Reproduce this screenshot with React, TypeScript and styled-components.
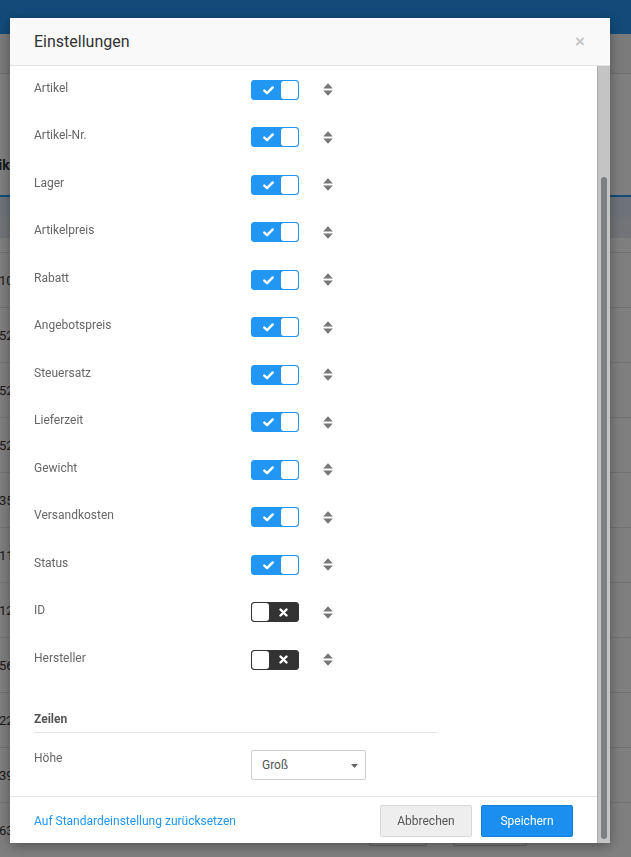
import React, { useLayoutEffect, useRef } from 'react';
import styled, { createGlobalStyle } from 'styled-components';

const GlobalStyle = createGlobalStyle`
  html, body { margin: 0; padding: 0; overflow: hidden; }
  body { font-family: Roboto, "Noto Sans", "Liberation Sans", sans-serif; background: #fff; }
  * { box-sizing: border-box; }
`;

/* ---------- page behind the dialog ---------- */
const Page = styled.div`
  width: 631px;
  height: 857px;
  overflow: hidden;
  background: #fff;
`;
const TopBar = styled.div`
  height: 34px;
  background: #2496f4;
`;
const SubBar = styled.div`
  height: 40px;
  background: #f6f6f6;
  border-bottom: 1px solid #dcdcdc;
`;
const PageHeading = styled.h1`
  margin: 0 0 0 -21px;
  height: 121px;
  padding-top: 81px;
  font: 700 14px/20px Roboto, sans-serif;
  color: #333;
`;
const TableHead = styled.div`
  height: 43px;
  border-top: 2px solid #2496f4;
  background: linear-gradient(#dbe7f2 0, #dbe7f2 50%, #e4e9ee 50%);
`;
const FilterGap = styled.div`
  height: 15px;
  border-bottom: 1px solid #e6e6e6;
`;
const TRow = styled.div`
  height: 55px;
  border-bottom: 1px solid #e6e6e6;
  display: flex;
  align-items: center;
  margin-left: -1px;
  font: 13px Roboto, sans-serif;
  color: #333;
`;
const RowActions = styled.div`
  margin-left: auto;
  margin-right: 104px;
  display: flex;
  gap: 26px;
`;
const GhostBtn = styled.span<{ $w: number }>`
  display: block;
  width: ${(p) => p.$w}px;
  height: 32px;
  border: 1px solid #c8c8c8;
  border-radius: 2px;
  background: #fafafa;
`;

/* ---------- dialog ---------- */
const Backdrop = styled.div`
  position: fixed;
  inset: 0;
  background: rgba(0, 0, 0, 0.5);
  padding: 18px 0 0 10px;
`;
const Modal = styled.div`
  width: 600px;
  height: 825px;
  background: #fff;
  display: flex;
  flex-direction: column;
  box-shadow: 0 3px 12px rgba(0, 0, 0, 0.35);
`;
const ModalHeader = styled.div`
  flex: none;
  height: 48px;
  background: #f9f9f9;
  border-bottom: 1px solid #e5e5e5;
  display: flex;
  align-items: center;
  justify-content: space-between;
  padding: 0 25px 0 24px;
`;
const Title = styled.h4`
  margin: 0;
  font: 400 16px/20px Roboto, sans-serif;
  color: #333;
`;
const Close = styled.button`
  border: 0;
  background: none;
  padding: 0;
  font: 700 17px/1 "Liberation Sans", Arial, sans-serif;
  color: #c6c6c6;
  cursor: pointer;
`;
const ScrollArea = styled.div`
  flex: 1;
  min-height: 0;
  display: flex;
`;
const ScrollContent = styled.div`
  flex: 1;
  min-width: 0;
  overflow: hidden;
`;
const ScrollTrack = styled.div`
  flex: none;
  width: 13px;
  background: #c4c4c4;
  border-left: 1px solid #a9a9a9;
  padding: 111px 3px 4px 3px;
`;
const ScrollThumb = styled.div`
  width: 6px;
  height: 662px;
  border-radius: 3px;
  background: #7d7f81;
`;
const Body = styled.div`
  padding: 12px 24px 16px;
`;
const SectionTitle = styled.div<{ $top: number }>`
  width: 403px;
  padding-top: ${(p) => p.$top}px;
  padding-bottom: 4px;
  border-bottom: 1px solid #e5e5e5;
  font: 700 12px/18px Roboto, sans-serif;
  color: #555;
`;
const Row = styled.div`
  display: grid;
  grid-template-columns: 217px 48px auto;
  align-items: center;
  height: 47.5px;
`;
const Label = styled.span`
  font: 400 12px/16px Roboto, sans-serif;
  color: #666;
  margin-bottom: 4px;
`;
const Toggle = styled.span<{ $on: boolean }>`
  position: relative;
  display: block;
  width: 48px;
  height: 20px;
  border-radius: 3px;
  border: 1px solid ${(p) => (p.$on ? '#2196f3' : '#333')};
  background: ${(p) => (p.$on ? '#2196f3' : '#333')};
`;
const Knob = styled.span<{ $on: boolean }>`
  position: absolute;
  top: 0;
  ${(p) => (p.$on ? 'right: 0;' : 'left: 0;')}
  width: 17px;
  height: 18px;
  border-radius: 3px;
  background: #fff;
`;
const ToggleMark = styled.svg<{ $on: boolean }>`
  position: absolute;
  top: ${(p) => (p.$on ? 5 : 4.5)}px;
  left: ${(p) => (p.$on ? 11 : 27)}px;
`;
const SortIcon = styled.svg`
  display: block;
  margin-left: 24px;
`;
const HeightRow = styled.div`
  display: grid;
  grid-template-columns: 217px 115px;
  align-items: start;
  margin-top: 17.5px;
`;
const PlainLabel = styled.span`
  font: 400 12px/16px Roboto, sans-serif;
  color: #666;
`;
const Select = styled.div`
  position: relative;
  height: 30px;
  border: 1px solid #cfcfcf;
  border-radius: 2px;
  padding-left: 10px;
  display: flex;
  align-items: center;
  font: 400 12px Roboto, sans-serif;
  color: #555;
  background: #fff;
`;
const Caret = styled.svg`
  position: absolute;
  right: 7px;
  top: 13px;
`;
const Footer = styled.div`
  border-top: 1px solid #e5e5e5;
  padding: 8px 24px 6px;
  display: flex;
  align-items: center;
`;
const ResetLink = styled.a`
  font: 400 12px/16px Roboto, sans-serif;
  color: #2196f3;
  text-decoration: none;
  margin-right: auto;
`;
const Button = styled.button<{ $primary?: boolean }>`
  width: 92px;
  height: 32px;
  margin-left: 9px;
  border-radius: 2px;
  font: 400 12px Roboto, sans-serif;
  cursor: pointer;
  border: 1px solid ${(p) => (p.$primary ? '#167fd8' : '#d8d8d8')};
  background: ${(p) => (p.$primary ? '#1a8ff0' : '#eeeeee')};
  color: ${(p) => (p.$primary ? '#fff' : '#555')};
`;

const columns: { label: string; on: boolean }[] = [
  { label: 'Bild', on: true },
  { label: 'Bezeichnung', on: true },
  { label: 'Artikel', on: true },
  { label: 'Artikel-Nr.', on: true },
  { label: 'Lager', on: true },
  { label: 'Artikelpreis', on: true },
  { label: 'Rabatt', on: true },
  { label: 'Angebotspreis', on: true },
  { label: 'Steuersatz', on: true },
  { label: 'Lieferzeit', on: true },
  { label: 'Gewicht', on: true },
  { label: 'Versandkosten', on: true },
  { label: 'Status', on: true },
  { label: 'ID', on: false },
  { label: 'Hersteller', on: false },
];

const pageRows = ['1045', '5234', '5218', '5290', '3571', '1184', '1263', '5607', '2291', '3948', '6302'];

function Switch({ on }: { on: boolean }) {
  return (
    <Toggle $on={on}>
      {on ? (
        <ToggleMark $on width="11" height="9" viewBox="0 0 11 9">
          <path d="M1.3 4.6 L4.1 7.2 L9.7 1.4" fill="none" stroke="#fff" strokeWidth="2.4" strokeLinecap="round" strokeLinejoin="round" />
        </ToggleMark>
      ) : (
        <ToggleMark $on={false} width="9" height="9" viewBox="0 0 9 9">
          <path d="M1.5 1.5 L7.5 7.5 M7.5 1.5 L1.5 7.5" fill="none" stroke="#fff" strokeWidth="2.4" strokeLinecap="round" />
        </ToggleMark>
      )}
      <Knob $on={on} />
    </Toggle>
  );
}

function Sort() {
  return (
    <SortIcon width="10" height="13" viewBox="0 0 10 13">
      <path d="M5 0.3 L9.8 5.6 H0.2 Z" fill="#777" />
      <path d="M0.2 7.4 H9.8 L5 12.7 Z" fill="#777" />
    </SortIcon>
  );
}

export default function App() {
  const scrollRef = useRef<HTMLDivElement>(null);
  useLayoutEffect(() => {
    const el = scrollRef.current;
    if (el) el.scrollTop = el.scrollHeight;
  }, []);

  return (
    <>
      <GlobalStyle />
      <Page>
        <TopBar />
        <SubBar />
        <PageHeading>Artikel</PageHeading>
        <TableHead />
        <FilterGap />
        {pageRows.map((n) => (
          <TRow key={n}>
            {n}
            <RowActions>
              <GhostBtn $w={58} />
              <GhostBtn $w={74} />
            </RowActions>
          </TRow>
        ))}
      </Page>
      <Backdrop>
        <Modal>
          <ModalHeader>
            <Title>Einstellungen</Title>
            <Close aria-label="Schließen">×</Close>
          </ModalHeader>
          <ScrollArea>
            <ScrollContent ref={scrollRef}>
              <Body>
                <SectionTitle $top={0}>Spalten</SectionTitle>
                {columns.map((c) => (
                  <Row key={c.label}>
                    <Label>{c.label}</Label>
                    <Switch on={c.on} />
                    <Sort />
                  </Row>
                ))}
                <SectionTitle $top={26}>Zeilen</SectionTitle>
                <HeightRow>
                  <PlainLabel>Höhe</PlainLabel>
                  <Select>
                    Groß
                    <Caret width="7" height="4" viewBox="0 0 7 4">
                      <path d="M0 0 H7 L3.5 4 Z" fill="#666" />
                    </Caret>
                  </Select>
                </HeightRow>
              </Body>
              <Footer>
                <ResetLink href="#">Auf Standardeinstellung zurücksetzen</ResetLink>
                <Button>Abbrechen</Button>
                <Button $primary>Speichern</Button>
              </Footer>
            </ScrollContent>
            <ScrollTrack>
              <ScrollThumb />
            </ScrollTrack>
          </ScrollArea>
        </Modal>
      </Backdrop>
    </>
  );
}
